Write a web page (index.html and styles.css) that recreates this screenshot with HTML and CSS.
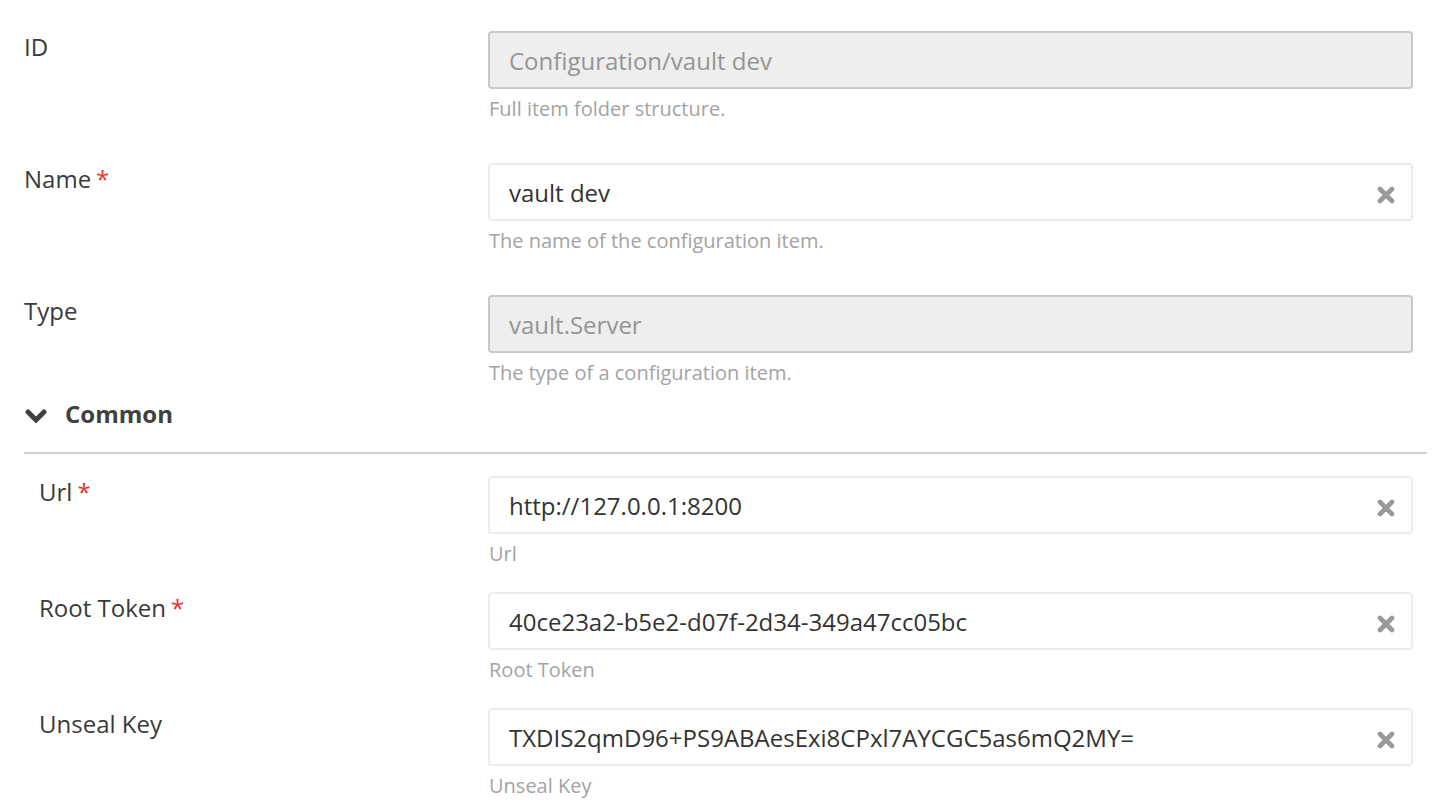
FILE: index.html
```html
<!DOCTYPE html>
<html>
<head>
<meta charset="utf-8">
<link rel="stylesheet" href="styles.css">
</head>
<body>
<div class="form">
  <div class="section top">
    <div class="row">
      <label class="label">ID</label>
      <div class="control">
        <div class="box disabled"><input class="field" value="Configuration/vault dev" disabled></div>
        <div class="help">Full item folder structure.</div>
      </div>
    </div>
    <div class="row">
      <label class="label">Name<span class="req">*</span></label>
      <div class="control">
        <div class="box"><input class="field" value="vault dev"><svg class="clear" viewBox="0 0 18 18"><path d="M3 3L15 15M15 3L3 15"/></svg></div>
        <div class="help">The name of the configuration item.</div>
      </div>
    </div>
    <div class="row">
      <label class="label">Type</label>
      <div class="control">
        <div class="box disabled"><input class="field" value="vault.Server" disabled></div>
        <div class="help">The type of a configuration item.</div>
      </div>
    </div>
  </div>

  <div class="group-header">
    <svg class="chevron" viewBox="0 0 22 14"><path d="M3 3L11 11L19 3"/></svg>
    <span class="group-title">Common</span>
  </div>

  <div class="section common">
    <div class="row">
      <label class="label">Url<span class="req">*</span></label>
      <div class="control">
        <div class="box"><input class="field" value="http://127.0.0.1:8200"><svg class="clear" viewBox="0 0 18 18"><path d="M3 3L15 15M15 3L3 15"/></svg></div>
        <div class="help">Url</div>
      </div>
    </div>
    <div class="row">
      <label class="label">Root Token<span class="req">*</span></label>
      <div class="control">
        <div class="box"><input class="field" value="40ce23a2-b5e2-d07f-2d34-349a47cc05bc"><svg class="clear" viewBox="0 0 18 18"><path d="M3 3L15 15M15 3L3 15"/></svg></div>
        <div class="help">Root Token</div>
      </div>
    </div>
    <div class="row">
      <label class="label">Unseal Key</label>
      <div class="control">
        <div class="box"><input class="field" value="TXDIS2qmD96+PS9ABAesExi8CPxl7AYCGC5as6mQ2MY="><svg class="clear" viewBox="0 0 18 18"><path d="M3 3L15 15M15 3L3 15"/></svg></div>
        <div class="help">Unseal Key</div>
      </div>
    </div>
  </div>
</div>
</body>
</html>
```

FILE: styles.css
```css
html, body {
  margin: 0;
  padding: 0;
  background: #fff;
}
body {
  font-family: "Open Sans", "Liberation Sans", sans-serif;
  color: #3a3a3a;
}
.form {
  padding: 31px 7px 0 24px;
}
.section {
  display: flex;
  flex-direction: column;
}
.section.top {
  gap: 40px;
}
.section.common {
  gap: 24px;
  padding-left: 15px;
  padding-top: 22px;
}
.row {
  display: flex;
  align-items: flex-start;
}
.label {
  width: 464px;
  flex: none;
  font-size: 24px;
  line-height: 29px;
  padding-top: 1px;
  color: #3a3a3a;
}
.common .label {
  width: 449px;
}
.req {
  color: #e8322c;
  margin-left: 5px;
}
.control {
  flex: 1;
  margin-right: 14px;
  display: flex;
  flex-direction: column;
}
.box {
  height: 58px;
  box-sizing: border-box;
  border: 2px solid #ececec;
  border-radius: 4px;
  background: #fff;
  display: flex;
  align-items: center;
  padding: 0 16px 0 19px;
}
.box.disabled {
  background: #eeeeee;
  border-color: #c9c9c9;
}
.field {
  flex: 1;
  min-width: 0;
  border: none;
  outline: none;
  background: transparent;
  padding: 0;
  margin: 0;
  font-family: "Open Sans", "Liberation Sans", sans-serif;
  font-size: 24px;
  color: #333;
}
.field:disabled {
  color: #959595;
}
.clear {
  width: 18px;
  height: 18px;
  flex: none;
  margin-top: 6px;
}
.clear path {
  stroke: #999;
  stroke-width: 4.6;
  stroke-linecap: round;
  fill: none;
}
.help {
  margin-top: 6px;
  padding-left: 1px;
  font-size: 20px;
  line-height: 28px;
  color: #a3a3a3;
}
.group-header {
  margin-top: 10px;
  display: flex;
  align-items: center;
  height: 34px;
  padding-bottom: 21px;
  border-bottom: 2px solid #d4d4d4;
}
.chevron {
  width: 22px;
  height: 14px;
  margin-left: 1px;
  margin-top: 3px;
}
.chevron path {
  stroke: #404040;
  stroke-width: 5;
  stroke-linecap: round;
  stroke-linejoin: miter;
  fill: none;
}
.group-title {
  margin-left: 18px;
  font-size: 24px;
  font-weight: 700;
  line-height: 34px;
  color: #404040;
}
```
